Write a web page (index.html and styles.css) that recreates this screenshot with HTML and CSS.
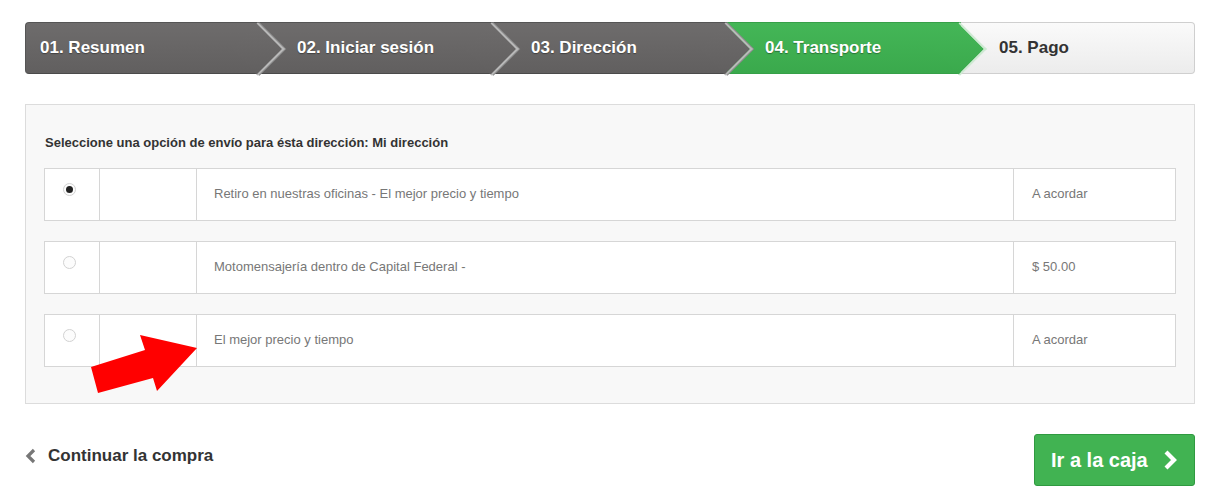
FILE: index.html
```html
<!DOCTYPE html>
<html lang="es">
<head>
<meta charset="utf-8">
<title>Transporte</title>
<link rel="stylesheet" href="styles.css">
</head>
<body>
<div class="page">
  <ol class="steps">
    <li class="step done first"><span>01. Resumen</span></li>
    <li class="step done"><span>02. Iniciar sesión</span></li>
    <li class="step done"><span>03. Dirección</span></li>
    <li class="step current"><span>04. Transporte</span></li>
    <li class="step todo last"><span>05. Pago</span></li>
  </ol>

  <div class="panel">
    <p class="panel-title">Seleccione una opción de envío para ésta dirección: Mi dirección</p>
    <div class="options">
      <div class="option">
        <div class="cell c-radio"><span class="radio checked"></span></div>
        <div class="cell c-logo"></div>
        <div class="cell c-desc">Retiro en nuestras oficinas - El mejor precio y tiempo</div>
        <div class="cell c-price">A acordar</div>
      </div>
      <div class="option">
        <div class="cell c-radio"><span class="radio"></span></div>
        <div class="cell c-logo"></div>
        <div class="cell c-desc">Motomensajería dentro de Capital Federal -</div>
        <div class="cell c-price">$ 50.00</div>
      </div>
      <div class="option">
        <div class="cell c-radio"><span class="radio"></span></div>
        <div class="cell c-logo"></div>
        <div class="cell c-desc">El mejor precio y tiempo</div>
        <div class="cell c-price">A acordar</div>
      </div>
    </div>
    <svg class="annot-arrow" width="110" height="62" viewBox="88 333 110 62" aria-hidden="true">
      <polygon points="91,367 145,350 140,335 197,348 157,391 153,378 98,393" fill="#ff0000"/>
    </svg>
  </div>

  <div class="actions">
    <a class="back" href="#">
      <svg width="12" height="16" viewBox="0 0 12 16" aria-hidden="true"><path d="M9 2 L3 8 L9 14" fill="none" stroke="#777" stroke-width="3.2"/></svg>
      <span>Continuar la compra</span>
    </a>
    <a class="checkout" href="#">
      <span>Ir a la caja</span>
      <svg width="16" height="22" viewBox="0 0 16 22" aria-hidden="true"><path d="M4 3 L12 11 L4 19" fill="none" stroke="#fff" stroke-width="4.2"/></svg>
    </a>
  </div>
</div>
</body>
</html>
```

FILE: styles.css
```css
* { box-sizing: border-box; }
html, body { margin: 0; padding: 0; background: #fff; }
body { font-family: "Liberation Sans", Arial, sans-serif; color: #333; }

.page {
  padding: 22px 27px 0 25px;
}

/* ---------- steps ---------- */
.steps {
  list-style: none;
  margin: 0;
  padding: 0;
  display: flex;
  height: 52px;
  border-radius: 4px;
}
.step {
  position: relative;
  flex: none;
  width: 20%;
  display: flex;
  align-items: center;
  padding-left: 38px;
  font-size: 17px;
  font-weight: bold;
  color: #fff;
  text-shadow: 0 1px 1px rgba(0,0,0,0.35);
  border-top: 1px solid #555;
  border-bottom: 1px solid #4a4a4a;
}
.step span { position: relative; z-index: 3; }
.step.first { padding-left: 14px; border-radius: 4px 0 0 4px; border-left: 1px solid #555; }
.step.done { background: linear-gradient(#6e6c6c, #615f5f); }
.step.current { background: linear-gradient(#44b657, #3aa94c); border-color: #36a048; }
.step.todo {
  background: linear-gradient(#fafafa, #ececec);
  color: #333;
  text-shadow: none;
  border: 1px solid #cfcfcf;
  border-left: 0;
  border-radius: 0 4px 4px 0;
}
.step::after {
  content: "";
  position: absolute;
  z-index: 2;
  top: 7px;
  right: -18px;
  width: 36px;
  height: 36px;
  transform: rotate(45deg);
  border-top: 2px solid #b9b9b9;
  border-right: 2px solid #b9b9b9;
  box-shadow: 1px -1px 0 #8a8a8a;
}
.step.done::after { background: linear-gradient(135deg, #6e6c6c, #615f5f); }
.step.current::after { background: linear-gradient(135deg, #44b657, #3aa94c); border-color: #cfe9d3; box-shadow: none; }
.step.last::after { display: none; }

/* ---------- panel ---------- */
.panel {
  position: relative;
  margin-top: 30px;
  background: #f8f8f8;
  border: 1px solid #dcdcdc;
  padding: 30px 18px 36px 18px;
}
.panel-title {
  margin: 0 0 17px 1px;
  font-size: 13px;
  font-weight: bold;
  color: #333;
  line-height: 16px;
}
.options {
  display: flex;
  flex-direction: column;
  gap: 20px;
}
.option {
  display: flex;
  height: 53px;
  background: #fff;
  border: 1px solid #d6d6d6;
}
.cell {
  display: flex;
  align-items: center;
  font-size: 13px;
  color: #777;
}
.cell + .cell { border-left: 1px solid #d6d6d6; }
.c-radio { width: 54px; justify-content: center; align-items: flex-start; padding: 14px 5px 0 0; }
.c-logo { width: 97px; }
.c-desc { flex: 1; padding-left: 17px; padding-bottom: 3px; }
.c-price { width: 162px; padding-left: 18px; padding-bottom: 3px; }

.radio {
  width: 13px;
  height: 13px;
  border-radius: 50%;
  border: 1px solid #d2d2d2;
  background: #fcfcfc;
  display: flex;
  align-items: center;
  justify-content: center;
}
.radio.checked::before {
  content: "";
  width: 7px;
  height: 7px;
  border-radius: 50%;
  background: #222;
}

.annot-arrow {
  position: absolute;
  left: 62px;
  top: 228px;
}

/* ---------- actions ---------- */
.actions {
  display: flex;
  justify-content: space-between;
  align-items: center;
  margin-top: 30px;
}
.back {
  display: flex;
  align-items: center;
  gap: 11px;
  margin-top: -8px;
  text-decoration: none;
  font-size: 17px;
  font-weight: bold;
  color: #333;
}
.checkout {
  display: flex;
  align-items: center;
  gap: 14px;
  height: 52px;
  width: 161px;
  padding-left: 16px;
  margin-right: 0;
  background: #41b352;
  border: 1px solid #2f9a40;
  border-radius: 3px;
  text-decoration: none;
  color: #fff;
  font-size: 20px;
  font-weight: bold;
}
```
